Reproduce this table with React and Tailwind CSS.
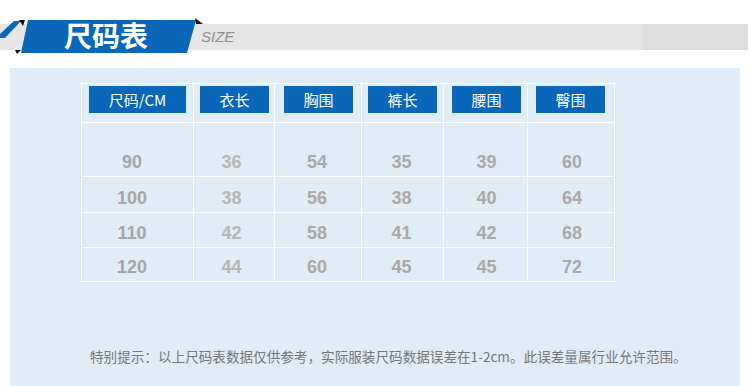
import React from "react";

const cols = [
  { w: "w-[112px]", ml: "ml-[7px]", bw: "w-[97px]", label: "尺码/CM", pr: "pr-[11px]", color: "text-[#a6a6a6]" },
  { w: "w-[81px]", ml: "ml-[6px]", bw: "w-[69px]", label: "衣长", pr: "pr-[5px]", color: "text-[#b8b5b5]" },
  { w: "w-[87px]", ml: "ml-[9px]", bw: "w-[69px]", label: "胸围", pr: "pr-[2px]", color: "text-[#aba8a8]" },
  { w: "w-[82px]", ml: "ml-[6px]", bw: "w-[69px]", label: "裤长", pr: "pr-[2px]", color: "text-[#aba8a8]" },
  { w: "w-[84px]", ml: "ml-[8px]", bw: "w-[69px]", label: "腰围", pr: "pl-[2px]", color: "text-[#aba8a8]" },
  { w: "w-[87px]", ml: "ml-[8px]", bw: "w-[69px]", label: "臀围", pr: "pl-[2px]", color: "text-[#aba8a8]" },
];

const rows = [
  { h: "h-[54px]", pad: "items-end pb-[3px]", vals: ["90", "36", "54", "35", "39", "60"] },
  { h: "h-[36px]", pad: "items-center pt-[6px]", vals: ["100", "38", "56", "38", "40", "64"] },
  { h: "h-[35px]", pad: "items-center pt-[5px]", vals: ["110", "42", "58", "41", "42", "68"] },
  { h: "h-[34px]", pad: "items-center pt-[5px]", vals: ["120", "44", "60", "45", "45", "72"] },
];

export default function App() {
  return (
    <div className="w-[750px] h-[386px] bg-white overflow-hidden">
      {/* Header */}
      <div className="relative h-[68px]">
        <div className="absolute left-0 top-[24px] w-[748px] h-[26px] flex">
          <div className="w-[643px] h-full bg-[#e5e5e5]" />
          <div className="flex-1 h-full bg-[#dedede]" />
        </div>
        <svg className="absolute left-0 top-0" width="210" height="60" viewBox="0 0 210 60">
          <polygon points="14,21 21,21 5,38 0,38 0,34" fill="#0a66b8" />
          <polygon points="28,20 196,20 187,53 21,53" fill="#0a66b8" />
          <polygon points="19,20 25,20 23,26" fill="#111" />
          <polygon points="15,50 21,50 17,54" fill="#111" />
          <polygon points="195,18 203,24 196,24" fill="#111" />
        </svg>
        <div
          className="absolute left-[64px] top-[17px] text-white text-[28px] font-semibold leading-[36px]"
          style={{ fontFamily: '"Noto Sans CJK SC", sans-serif' }}
        >
          尺码表
        </div>
        <div
          className="absolute left-[201px] top-[28px] text-[#8e8e8e] text-[15px] italic leading-[18px]"
          style={{ fontFamily: '"Liberation Sans", Arial, sans-serif' }}
        >
          SIZE
        </div>
      </div>

      {/* Panel */}
      <div className="ml-[10px] w-[730px] h-[318px] bg-[#e0ecf6] pt-[15px] pl-[71px]">
        <div className="w-[534px] border-l border-t border-white">
          <div className="flex h-[39px]">
            {cols.map((c, i) => (
              <div key={i} className={`${c.w} h-full border-r border-b border-white flex items-start pt-[2px]`}>
                <div
                  className={`${c.ml} ${c.bw} h-[27px] bg-[#0a66b8] text-white text-[15px] flex items-center justify-center leading-none`}
                  style={{ fontFamily: '"Noto Sans CJK SC", sans-serif' }}
                >
                  {c.label}
                </div>
              </div>
            ))}
          </div>
          {rows.map((r, ri) => (
            <div key={ri} className={`flex ${r.h}`}>
              {cols.map((c, i) => (
                <div
                  key={i}
                  className={`${c.w} h-full border-r border-b border-white flex justify-center ${r.pad} ${c.pr} ${c.color} text-[18px] font-bold leading-[22px]`}
                  style={{ fontFamily: '"Liberation Sans", Arial, sans-serif' }}
                >
                  {r.vals[i]}
                </div>
              ))}
            </div>
          ))}
        </div>
        <div
          className="mt-[64px] ml-[9px] text-[#777777] text-[13.6px] leading-[20px] whitespace-nowrap"
          style={{ fontFamily: '"Noto Sans CJK SC", sans-serif' }}
        >
          特别提示：以上尺码表数据仅供参考，实际服装尺码数据误差在1-2cm。此误差量属行业允许范围。
        </div>
      </div>
    </div>
  );
}
